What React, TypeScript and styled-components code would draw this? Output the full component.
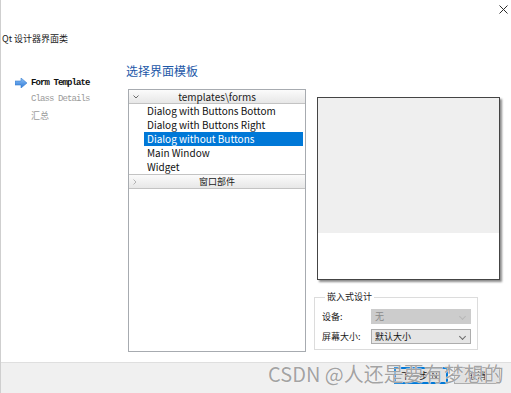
import styled, { createGlobalStyle } from 'styled-components';

const GlobalStyle = createGlobalStyle`
  html, body {
    margin: 0;
    padding: 0;
    background: #ffffff;
  }
  body {
    width: 511px;
    height: 393px;
    overflow: hidden;
    font-family: "Noto Sans CJK SC", "Noto Sans", sans-serif;
    color: #000;
  }
`;

const templates = [
  'Dialog with Buttons Bottom',
  'Dialog with Buttons Right',
  'Dialog without Buttons',
  'Main Window',
  'Widget',
];

const steps = [
  { label: 'Form Template', mono: true },
  { label: 'Class Details', mono: true },
  { label: '汇总', mono: false },
];

const App = () => {
  return (
    <>
      <GlobalStyle />
      <Window>
        <TitleBar>
          <svg width="9" height="9" viewBox="0 0 9 9">
            <path d="M0.5 0.5 L8.5 8.5 M8.5 0.5 L0.5 8.5" stroke="#2b2b2b" strokeWidth="1" />
          </svg>
        </TitleBar>
        <PageTitle>Qt 设计器界面类</PageTitle>

        <Content>
          <Sidebar>
            {steps.map((s, i) => (
              <StepItem key={s.label} $active={i === 0} $mono={s.mono}>
                <StepArrow>
                  {i === 0 && (
                    <svg width="12" height="10" viewBox="0 0 12 10">
                      <defs>
                        <linearGradient id="arr" x1="0" y1="0" x2="0" y2="1">
                          <stop offset="0" stopColor="#8cc0f5" />
                          <stop offset="1" stopColor="#2f7ad8" />
                        </linearGradient>
                      </defs>
                      <polygon points="0,3 6,3 6,0 12,5 6,10 6,7 0,7" fill="url(#arr)" stroke="#3a7fd0" strokeWidth="0.6" />
                    </svg>
                  )}
                </StepArrow>
                {s.label}
              </StepItem>
            ))}
          </Sidebar>

          <Main>
            <Heading>选择界面模板</Heading>
            <Panels>
              <TreeBox>
                <TreeHeader>
                  <Chevron>
                    <svg width="6" height="4" viewBox="0 0 6 4">
                      <path d="M0.5 0.5 L3 3 L5.5 0.5" stroke="#6a6a6a" fill="none" strokeWidth="1" />
                    </svg>
                  </Chevron>
                  templates\forms
                </TreeHeader>
                {templates.map((t, i) => (
                  <TreeRow key={t} $selected={i === 2}>
                    {t}
                  </TreeRow>
                ))}
                <TreeHeader $second>
                  <Chevron>
                    <svg width="4" height="6" viewBox="0 0 4 6">
                      <path d="M0.5 0.5 L3 3 L0.5 5.5" stroke="#b4b4b4" fill="none" strokeWidth="1" />
                    </svg>
                  </Chevron>
                  窗口部件
                </TreeHeader>
              </TreeBox>

              <RightColumn>
                <Preview>
                  <PreviewForm />
                </Preview>

                <GroupBox>
                  <GroupTitle>嵌入式设计</GroupTitle>
                  <FormGrid>
                    <FieldLabel>设备:</FieldLabel>
                    <Combo $disabled>
                      无
                      <ComboArrow $disabled />
                    </Combo>
                    <FieldLabel>屏幕大小:</FieldLabel>
                    <Combo>
                      默认大小
                      <ComboArrow />
                    </Combo>
                  </FormGrid>
                </GroupBox>
              </RightColumn>
            </Panels>
          </Main>
        </Content>

        <Footer>
          <Button $default>下一步(N)</Button>
          <Button>取消</Button>
          <Watermark>CSDN @人还是要有梦想的</Watermark>
        </Footer>
      </Window>
    </>
  );
};

export default App;

const Window = styled.div`
  display: flex;
  flex-direction: column;
  width: 511px;
  height: 393px;
  box-sizing: border-box;
  border-left: 1px solid #cfcfcf;
  background: #ffffff;
`;

const TitleBar = styled.div`
  height: 18px;
  display: flex;
  justify-content: flex-end;
  align-items: center;
  padding-right: 3px;
  svg {
    display: block;
  }
`;

const PageTitle = styled.div`
  margin-top: 14px;
  height: 14px;
  line-height: 14px;
  font-size: 9px;
  color: #1a1a1a;
  padding-left: 1px;
`;

const Content = styled.div`
  flex: 1;
  display: flex;
  min-height: 0;
`;

const Sidebar = styled.div`
  width: 125px;
  padding: 29px 0 0 14px;
  box-sizing: border-box;
  display: flex;
  flex-direction: column;
`;

const StepItem = styled.div<{ $active: boolean; $mono: boolean }>`
  display: flex;
  align-items: center;
  height: 16px;
  font-family: ${({ $mono }) => ($mono ? '"Liberation Mono", "DejaVu Sans Mono", monospace' : '"Noto Sans CJK SC", sans-serif')};
  font-size: 9px;
  letter-spacing: ${({ $mono }) => ($mono ? '-0.9px' : '0')};
  font-weight: ${({ $active }) => ($active ? 700 : 400)};
  color: ${({ $active }) => ($active ? '#111111' : '#9b9b9b')};
  white-space: nowrap;
`;

const StepArrow = styled.span`
  width: 16px;
  height: 10px;
  flex-shrink: 0;
  svg {
    display: block;
  }
`;

const Main = styled.div`
  flex: 1;
  display: flex;
  flex-direction: column;
`;

const Heading = styled.div`
  margin-top: 17px;
  height: 16px;
  line-height: 16px;
  font-size: 12px;
  color: #1d58a8;
`;

const Panels = styled.div`
  margin-top: 10px;
  display: flex;
  align-items: flex-start;
  padding-left: 2px;
`;

const TreeBox = styled.div`
  width: 178px;
  height: 263px;
  box-sizing: border-box;
  border: 1px solid #a7abb0;
  background: #ffffff;
  display: flex;
  flex-direction: column;
`;

const TreeHeader = styled.div<{ $second?: boolean }>`
  position: relative;
  box-sizing: border-box;
  display: flex;
  align-items: center;
  justify-content: center;
  font-size: ${({ $second }) => ($second ? '9px' : '10px')};
  color: #1a1a1a;
  background: linear-gradient(#fbfbfb, #e7e7e7);
  border-bottom: 1px solid #c3c3c3;
  border-top: ${({ $second }) => ($second ? '1px solid #c3c3c3' : 'none')};
  height: ${({ $second }) => ($second ? '15px' : '14px')};
`;

const Chevron = styled.span`
  position: absolute;
  left: 4px;
  top: 50%;
  transform: translateY(-50%);
  svg {
    display: block;
  }
`;

const TreeRow = styled.div<{ $selected: boolean }>`
  height: 14px;
  line-height: 14px;
  margin: 0 2px 0 15px;
  padding-left: 3px;
  font-size: 10px;
  white-space: nowrap;
  background: ${({ $selected }) => ($selected ? '#0078d7' : 'transparent')};
  color: ${({ $selected }) => ($selected ? '#ffffff' : '#111111')};
`;

const RightColumn = styled.div`
  margin-left: 8px;
  display: flex;
  flex-direction: column;
`;

const Preview = styled.div`
  margin: 8px 0 0 3px;
  width: 183px;
  height: 183px;
  box-sizing: border-box;
  border: 1px solid #444444;
  background: #ffffff;
  box-shadow: 2px 2px 2px rgba(0, 0, 0, 0.45);
`;

const PreviewForm = styled.div`
  height: 135px;
  background: #efefef;
`;

const GroupBox = styled.fieldset`
  margin: 11px 0 0 0;
  width: 164px;
  box-sizing: border-box;
  padding: 6px 7px 5px 7px;
  border: 1px solid #dcdcdc;
  min-width: 0;
`;

const GroupTitle = styled.legend`
  font-size: 9px;
  line-height: 12px;
  padding: 0 2px;
  margin-left: 3px;
  color: #1a1a1a;
`;

const FormGrid = styled.div`
  display: grid;
  grid-template-columns: 49px 100px;
  row-gap: 5px;
  align-items: center;
`;

const FieldLabel = styled.div`
  font-size: 9px;
  color: #1a1a1a;
  white-space: nowrap;
`;

const Combo = styled.div<{ $disabled?: boolean }>`
  position: relative;
  height: 15px;
  box-sizing: border-box;
  padding-left: 3px;
  display: flex;
  align-items: center;
  font-size: 9px;
  background: ${({ $disabled }) => ($disabled ? '#cccccc' : '#e5e5e5')};
  border: 1px solid ${({ $disabled }) => ($disabled ? '#cccccc' : '#adadad')};
  color: ${({ $disabled }) => ($disabled ? '#8a8a8a' : '#111111')};
`;

const ComboArrow = styled.span<{ $disabled?: boolean }>`
  position: absolute;
  right: 5px;
  top: 4px;
  width: 4px;
  height: 4px;
  border-right: 1px solid ${({ $disabled }) => ($disabled ? '#b8b8b8' : '#6a6a6a')};
  border-bottom: 1px solid ${({ $disabled }) => ($disabled ? '#b8b8b8' : '#6a6a6a')};
  transform: rotate(45deg);
`;

const Footer = styled.div`
  position: relative;
  height: 31px;
  box-sizing: border-box;
  border-top: 1px solid #dfdfdf;
  background: #f0f0f0;
  display: flex;
  justify-content: flex-end;
  align-items: flex-start;
  gap: 6px;
  padding: 4px 11px 0 0;
`;

const Button = styled.div<{ $default?: boolean }>`
  height: 17px;
  box-sizing: border-box;
  min-width: ${({ $default }) => ($default ? '54px' : '46px')};
  display: flex;
  align-items: center;
  justify-content: center;
  font-size: 9px;
  color: #111111;
  background: #e1e1e1;
  border: ${({ $default }) => ($default ? '2px solid #0078d7' : '1px solid #adadad')};
`;

const Watermark = styled.div`
  position: absolute;
  left: 267px;
  top: -2px;
  font-size: 20px;
  line-height: 26px;
  color: #a3a3a3;
  white-space: nowrap;
  text-shadow: 0 0 1px #ffffff, 0 0 1px #ffffff;
  pointer-events: none;
`;
